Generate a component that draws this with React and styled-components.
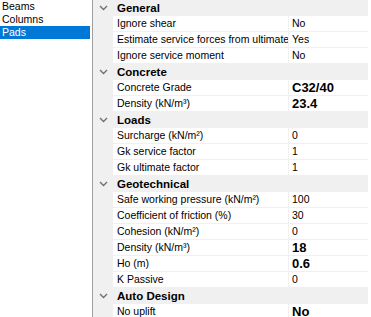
import React from "react";
import styled, { createGlobalStyle } from "styled-components";

const Global = createGlobalStyle`
  html, body { margin: 0; padding: 0; background: #fff; }
  body { font-family: "Liberation Sans", Arial, sans-serif; }
`;

const Window = styled.div`
  display: flex;
  width: 371px;
  height: 317px;
  overflow: hidden;
  background: #fff;
`;

const List = styled.ul`
  list-style: none;
  margin: 0;
  padding: 0;
  width: 90px;
  flex: none;
  font-size: 10.5px;
`;

const ListItem = styled.li`
  height: 13px;
  line-height: 13px;
  padding-left: 2px;
  color: ${(p) => (p.$selected ? "#fff" : "#000")};
  background: ${(p) => (p.$selected ? "#0078d7" : "transparent")};
`;

const Grid = styled.div`
  flex: 1;
  margin-left: 2px;
  margin-right: 3px;
  border-left: 1px solid #a0a0a0;
  background: #f0f0f0;
  display: flex;
  flex-direction: column;
  font-size: 10.5px;
  color: #000;
`;

const HeaderRow = styled.div`
  display: flex;
  align-items: center;
  height: 16px;
  flex: none;
  background: #f0f0f0;
`;

const Margin = styled.div`
  width: 20px;
  flex: none;
  display: flex;
  align-items: center;
  justify-content: center;
  align-self: stretch;
`;

const HeaderText = styled.span`
  padding-left: 4px;
  font-weight: bold;
  font-size: 11.5px;
`;

const ItemRow = styled.div`
  display: flex;
  height: 16px;
  flex: none;
`;

const Label = styled.div`
  width: 176px;
  flex: none;
  background: #fff;
  border-bottom: 1px solid #f0f0f0;
  border-right: 1px solid #f0f0f0;
  padding-left: 4px;
  box-sizing: border-box;
  line-height: 15px;
  white-space: nowrap;
  overflow: hidden;
`;

const Value = styled.div`
  flex: 1;
  background: #fff;
  border-bottom: 1px solid #f0f0f0;
  padding-left: 3px;
  line-height: 15px;
  white-space: nowrap;
  font-weight: ${(p) => (p.$bold ? "bold" : "normal")};
  font-size: ${(p) => (p.$bold ? "13px" : "10.5px")};
`;

const Chevron = () => (
  <svg width="9" height="6" viewBox="0 0 9 6">
    <polyline points="1,1 4.5,4.5 8,1" fill="none" stroke="#6d6d6d" strokeWidth="1.3" />
  </svg>
);

const sections = [
  {
    title: "General",
    items: [
      ["Ignore shear", "No"],
      ["Estimate service forces from ultimate", "Yes"],
      ["Ignore service moment", "No"],
    ],
  },
  {
    title: "Concrete",
    items: [
      ["Concrete Grade", "C32/40", true],
      ["Density (kN/m³)", "23.4", true],
    ],
  },
  {
    title: "Loads",
    items: [
      ["Surcharge (kN/m²)", "0"],
      ["Gk service factor", "1"],
      ["Gk ultimate factor", "1"],
    ],
  },
  {
    title: "Geotechnical",
    items: [
      ["Safe working pressure (kN/m²)", "100"],
      ["Coefficient of friction (%)", "30"],
      ["Cohesion (kN/m²)", "0"],
      ["Density (kN/m³)", "18", true],
      ["Ho (m)", "0.6", true],
      ["K Passive", "0"],
    ],
  },
  {
    title: "Auto Design",
    items: [["No uplift", "No", true]],
  },
];

export default function App() {
  return (
    <>
      <Global />
      <Window>
        <List>
          <ListItem>Beams</ListItem>
          <ListItem>Columns</ListItem>
          <ListItem $selected>Pads</ListItem>
        </List>
        <Grid>
          {sections.map((s) => (
            <React.Fragment key={s.title}>
              <HeaderRow>
                <Margin>
                  <Chevron />
                </Margin>
                <HeaderText>{s.title}</HeaderText>
              </HeaderRow>
              {s.items.map(([label, value, bold], i) => (
                <ItemRow key={s.title + i}>
                  <Margin />
                  <Label>{label}</Label>
                  <Value $bold={bold}>{value}</Value>
                </ItemRow>
              ))}
            </React.Fragment>
          ))}
        </Grid>
      </Window>
    </>
  );
}
